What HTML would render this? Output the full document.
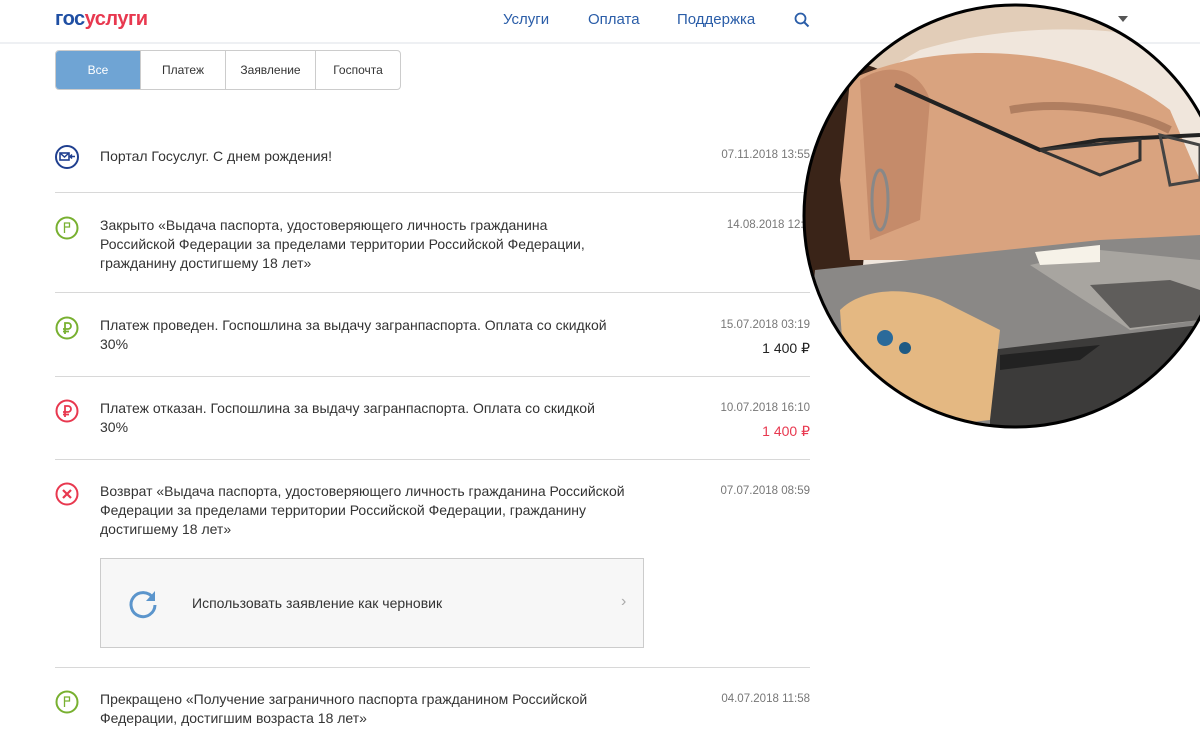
<!DOCTYPE html>
<html><head><meta charset="utf-8"><style>
body{margin:0;width:1200px;height:745px;overflow:hidden;background:#fff;font-family:"Liberation Sans",Arial,sans-serif;color:#333;position:relative}
.hdr{position:absolute;left:0;top:0;width:1200px;height:42px;border-bottom:2px solid #eef0f3}
.logo{position:absolute;left:55px;top:8px;font-size:20px;font-weight:bold;letter-spacing:-0.5px}
.nav{position:absolute;top:11px;font-size:15px;color:#2a5da8}
.tabs{position:absolute;left:55px;top:50px;height:38px;border:1px solid #ccc;border-radius:4px;display:flex;overflow:hidden}
.tabs div{font-size:12px;line-height:38px;text-align:center;border-left:1px solid #ccc}
.tabs div:first-child{border-left:none;background:#6fa4d4;color:#fff}
.row{position:absolute;left:55px;width:755px}
.tx{position:absolute;left:45px;font-size:14px;line-height:19px;color:#333;white-space:nowrap}
.dt{position:absolute;right:0;font-size:11.5px;color:#777}
.sum{position:absolute;right:0;font-size:14px}
.sep{position:absolute;left:55px;width:755px;height:1px;background:#d8d8d8}
</style></head><body>
<div class="hdr">
<div class="logo"><span style="color:#1f4fa3">гос</span><span style="color:#e8384f">услуги</span></div>
<div class="nav" style="left:503px">Услуги</div>
<div class="nav" style="left:588px">Оплата</div>
<div class="nav" style="left:677px">Поддержка</div>
<svg style="position:absolute;left:794px;top:12px" width="16" height="16"><circle cx="6.5" cy="6.5" r="5" fill="none" stroke="#2a5da8" stroke-width="1.8"/><line x1="10" y1="10" x2="14.5" y2="14.5" stroke="#2a5da8" stroke-width="2"/></svg>
<div style="position:absolute;left:1118px;top:16px;border:5px solid transparent;border-top:6px solid #555"></div>
</div>
<div class="tabs"><div style="width:84px">Все</div><div style="width:84px">Платеж</div><div style="width:89px">Заявление</div><div style="width:84px">Госпочта</div></div>

<div class="row" style="top:145px">
<svg style="position:absolute;left:0;top:0" width="24" height="24" viewBox="0 0 24 24"><circle cx="12" cy="12" r="11" fill="none" stroke="#1f3f8f" stroke-width="2"/><rect x="5" y="8" width="9" height="7" fill="none" stroke="#1f3f8f" stroke-width="1.6"/><path d="M5 8l4.5 4 4.5-4M20 11.5h-5m2-2l-2 2 2 2" fill="none" stroke="#1f3f8f" stroke-width="1.5"/></svg>
<div class="tx" style="top:2px">Портал Госуслуг. С днем рождения!</div>
<div class="dt" style="top:4px">07.11.2018 13:55</div></div>
<div class="sep" style="top:192px"></div>

<div class="row" style="top:216px">
<svg style="position:absolute;left:0;top:0" width="24" height="24" viewBox="0 0 24 24"><circle cx="12" cy="12" r="10.5" fill="none" stroke="#78b030" stroke-width="2"/><path d="M9.5 17V7h5v4h-5" fill="none" stroke="#78b030" stroke-width="1.3"/></svg>
<div class="tx" style="top:0">Закрыто «Выдача паспорта, удостоверяющего личность гражданина<br>Российской Федерации за пределами территории Российской Федерации,<br>гражданину достигшему 18 лет»</div>
<div class="dt" style="top:3px">14.08.2018 12:5</div></div>
<div class="sep" style="top:292px"></div>

<div class="row" style="top:316px">
<svg style="position:absolute;left:0;top:0" width="24" height="24" viewBox="0 0 24 24"><circle cx="12" cy="12" r="10.5" fill="none" stroke="#78b030" stroke-width="2"/><path d="M10 18V7h3a3 3 0 010 6H8m0 2.5h6" fill="none" stroke="#78b030" stroke-width="1.8"/></svg>
<div class="tx" style="top:0">Платеж проведен. Госпошлина за выдачу загранпаспорта. Оплата со скидкой<br>30%</div>
<div class="dt" style="top:3px">15.07.2018 03:19</div>
<div class="sum" style="top:24px;color:#222">1 400 ₽</div></div>
<div class="sep" style="top:376px"></div>

<div class="row" style="top:399px">
<svg style="position:absolute;left:0;top:0" width="24" height="24" viewBox="0 0 24 24"><circle cx="12" cy="12" r="10.5" fill="none" stroke="#e8384f" stroke-width="2"/><path d="M10 18V7h3a3 3 0 010 6H8m0 2.5h6" fill="none" stroke="#e8384f" stroke-width="1.8"/></svg>
<div class="tx" style="top:0">Платеж отказан. Госпошлина за выдачу загранпаспорта. Оплата со скидкой<br>30%</div>
<div class="dt" style="top:3px">10.07.2018 16:10</div>
<div class="sum" style="top:24px;color:#e8384f">1 400 ₽</div></div>
<div class="sep" style="top:459px"></div>

<div class="row" style="top:482px">
<svg style="position:absolute;left:0;top:0" width="24" height="24" viewBox="0 0 24 24"><circle cx="12" cy="12" r="10.5" fill="none" stroke="#e8384f" stroke-width="2"/><path d="M8 8l8 8M16 8l-8 8" stroke="#e8384f" stroke-width="2.2"/></svg>
<div class="tx" style="top:0">Возврат «Выдача паспорта, удостоверяющего личность гражданина Российской<br>Федерации за пределами территории Российской Федерации, гражданину<br>достигшему 18 лет»</div>
<div class="dt" style="top:3px">07.07.2018 08:59</div></div>

<div style="position:absolute;left:100px;top:558px;width:542px;height:88px;border:1px solid #ccc;background:#f7f7f7">
<svg style="position:absolute;left:25px;top:27px" width="34" height="34" viewBox="0 0 34 34"><path d="M27 12A12 12 0 1 0 29 19" fill="none" stroke="#5b95cc" stroke-width="3"/><path d="M29 5v10h-9z" fill="#5b95cc"/></svg>
<div style="position:absolute;left:91px;top:36px;font-size:14px;color:#333">Использовать заявление как черновик</div>
<div style="position:absolute;left:520px;top:34px;font-size:16px;color:#aaa">›</div>
</div>
<div class="sep" style="top:667px"></div>

<div class="row" style="top:690px">
<svg style="position:absolute;left:0;top:0" width="24" height="24" viewBox="0 0 24 24"><circle cx="12" cy="12" r="10.5" fill="none" stroke="#78b030" stroke-width="2"/><path d="M9.5 17V7h5v4h-5" fill="none" stroke="#78b030" stroke-width="1.3"/></svg>
<div class="tx" style="top:0">Прекращено «Получение заграничного паспорта гражданином Российской<br>Федерации, достигшим возраста 18 лет»</div>
<div class="dt" style="top:3px">04.07.2018 11:58</div></div>

<svg style="position:absolute;left:800px;top:0" width="400" height="432" viewBox="0 0 400 432">
<defs><clipPath id="c"><circle cx="215" cy="216" r="212"/></clipPath></defs>
<g clip-path="url(#c)">
<rect width="400" height="432" fill="#f0e6dc"/>
<path d="M0 0H400V50C330 25 220 20 120 50L0 120Z" fill="#e2cdb8"/>
<path d="M0 80C30 60 60 60 80 70L60 300 0 300Z" fill="#3a2418"/>
<path d="M50 80C130 40 280 40 370 110L400 180 400 260 320 250 240 260 120 260 50 260 40 180Z" fill="#d9a37f"/>
<path d="M60 80C90 60 120 70 130 100L120 220 70 240Z" fill="#c58b6a"/>
<path d="M210 110C260 100 330 110 370 130" fill="none" stroke="#b07e60" stroke-width="8"/>
<path d="M95 85L240 150 300 140 400 135" fill="none" stroke="#222" stroke-width="4"/>
<path d="M240 150L300 175 340 160 340 140Z" fill="none" stroke="#333" stroke-width="3"/>
<path d="M360 135L400 145 400 180 370 185Z" fill="none" stroke="#444" stroke-width="3"/>
<ellipse cx="80" cy="200" rx="8" ry="30" fill="none" stroke="#888" stroke-width="3"/>
<path d="M15 270L300 240 400 235 400 432 0 432Z" fill="#8a8886"/>
<path d="M230 265L300 250 400 260 400 320 330 330Z" fill="#a8a5a0"/>
<path d="M290 285L370 280 400 290 400 320 330 328Z" fill="#5f5d5b"/>
<path d="M190 350L400 325 400 432 190 432Z" fill="#3c3b3a"/>
<path d="M200 355L300 345 280 360 200 370Z" fill="#222"/>
<path d="M235 252L300 245 300 262 240 265Z" fill="#f6f2e8"/>
<path d="M40 310C60 290 100 285 140 300L200 330 190 420 80 432 45 380Z" fill="#e4b882"/>
<circle cx="85" cy="338" r="8" fill="#2a6a9a"/><circle cx="105" cy="348" r="6" fill="#1e5a84"/>
</g>
<circle cx="215" cy="216" r="211" fill="none" stroke="#000" stroke-width="3"/>
</svg>
</body></html>
